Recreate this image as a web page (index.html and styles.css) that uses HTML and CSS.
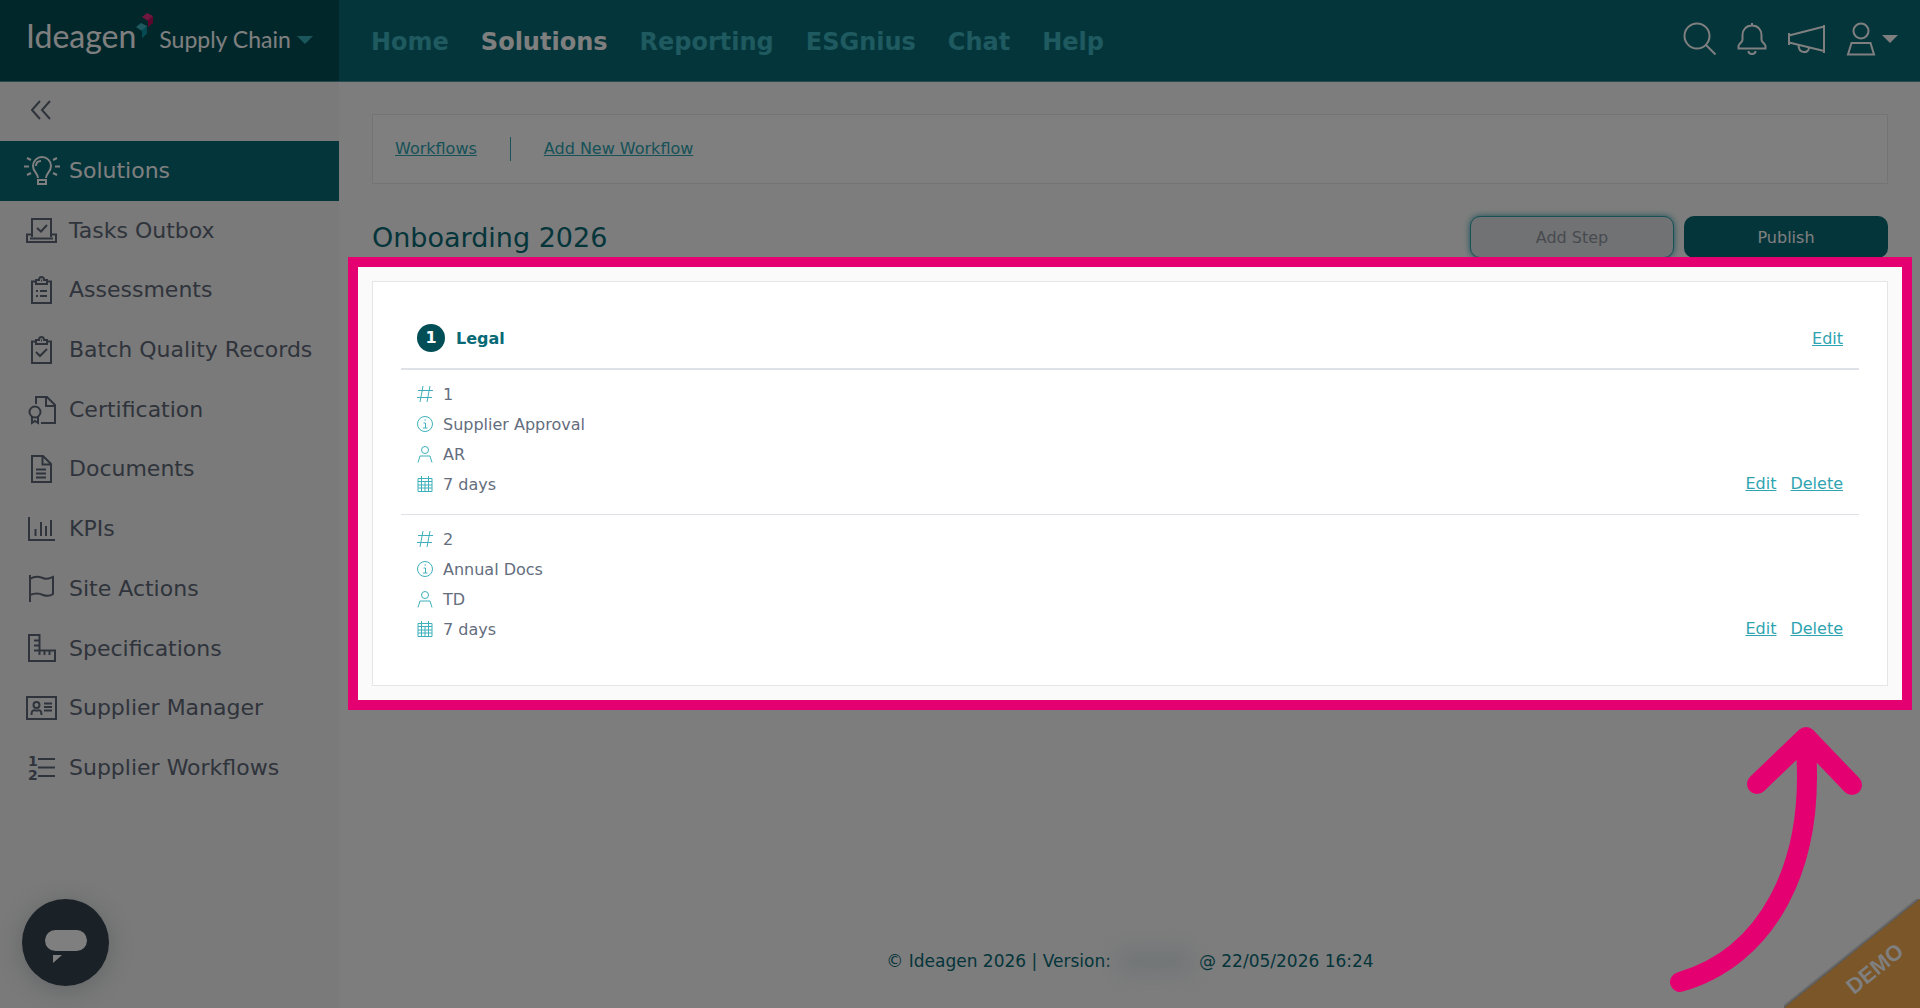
FILE: index.html
```html
<!DOCTYPE html>
<html lang="en">
<head>
  <meta charset="UTF-8" />
  <meta name="viewport" content="width=device-width, initial-scale=1.0"/>
  <title>Onboarding 2026 - Ideagen Supply Chain</title>
  <link rel="stylesheet" href="styles.css">
</head>
<body>
  <header class="topbar">
    <button class="brand" type="button">
      <span class="brand-name">Ideagen</span>
      <svg class="brand-mark" width="18" height="26" viewBox="0 0 18 26">
        <path d="M6 4 L11 0 L17 3 L17 9 L12 14 L12 8 Z" fill="#e0307e"/>
        <path d="M12 7 L17 3 L17 10 L12 14 Z" fill="#b8105c"/>
        <path d="M0 14 L5 10 L11 13 L11 20 L6 25 L6 18 Z" fill="#3fb4c0"/>
        <path d="M6 17 L11 13 L11 20 L6 25 Z" fill="#0a92a6"/>
      </svg>
      <span class="brand-product">Supply Chain</span>
      <span class="caret caret-teal"></span>
    </button>
    <nav class="main-nav">
      <a href="#">Home</a>
      <a href="#" class="active">Solutions</a>
      <a href="#">Reporting</a>
      <a href="#">ESGnius</a>
      <a href="#">Chat</a>
      <a href="#">Help</a>
    </nav>
    <div class="tools">
      <button type="button" aria-label="Search">
        <svg width="34" height="34" viewBox="0 0 34 34"><circle cx="14" cy="14" r="12.500"/><path d="M23 23 L32.500 32.500"/></svg>
      </button>
      <button type="button" aria-label="Notifications">
        <svg width="30" height="34" viewBox="0 0 30 34"><path d="M15 1 V4 M15 3.500 C9 3.500 5.500 8 5.500 13 V18 C5.500 20 1.500 22 1.500 24 V26.500 H28.500 V24 C28.500 22 24.500 20 24.500 18 V13 C24.500 8 21 3.500 15 3.500 Z M11.500 29 C11.500 33 18.500 33 18.500 29"/></svg>
      </button>
      <button type="button" aria-label="Announcements">
        <svg width="39" height="34" viewBox="0 0 39 34"><path d="M2 11 V23 M2 13.500 L37 4.500 V29 L2 20.500 M37 3 V31 M11.500 23 C11.500 32 22 32 22 25.500"/></svg>
      </button>
      <button type="button" aria-label="Account" class="account">
        <svg width="30" height="34" viewBox="0 0 30 34"><circle cx="15" cy="9" r="7.500"/><path d="M5.500 21 H24.500 L28 32.500 H2 Z"/></svg>
        <span class="caret caret-white"></span>
      </button>
    </div>
  </header>

  <div class="layout">
    <aside class="sidebar">
      <button class="collapse" type="button" aria-label="Collapse menu">
        <svg width="20" height="20" viewBox="0 0 20 20"><path d="M9 1 L1 10 L9 19 M19 1 L11 10 L19 19"/></svg>
      </button>
      <ul class="menu">
        <li><a href="#" class="active">
          <svg width="36" height="30" viewBox="0 0 36 30"><path d="M14 22 C14 17 9 16 9 10 A9 9 0 0 1 27 10 C27 16 22 17 22 22 M14 24 H22 V28 H14 Z M12 10 C12 7 14 5 17 5 M0 10.500 H5 M31 10.500 H36 M3 2 L7 4 M33 2 L29 4 M3 19 L7 17 M33 19 L29 17"/></svg>
          Solutions</a></li>
        <li><a href="#">
          <svg width="36" height="30" viewBox="0 0 36 30"><path d="M8 21 V3 H27 V21 M7 18.500 H3 V26 H32 V18.500 H28 M6 22.500 H29 M13 12 L17 15.500 L23 9"/></svg>
          Tasks Outbox</a></li>
        <li><a href="#">
          <svg width="36" height="30" viewBox="0 0 36 30"><path d="M12 6.500 H8 V28 H27 V6.500 H23 M12 9 V5 H15 C15 1 20 1 20 5 H23 V9 Z M17 5.500 H18 M12 16 H14 M16 16 H23 M12 21 H14 M16 21 H23"/></svg>
          Assessments</a></li>
        <li><a href="#">
          <svg width="36" height="30" viewBox="0 0 36 30"><path d="M12 6.500 H8 V28 H27 V6.500 H23 M12 9 V5 H15 C15 1 20 1 20 5 H23 V9 Z M17 5.500 H18 M12 17 L16 21 L23 14"/></svg>
          Batch Quality Records</a></li>
        <li><a href="#">
          <svg width="36" height="30" viewBox="0 0 36 30"><circle cx="11" cy="17" r="5.500"/><path d="M8 21.500 V28 L11 26 L14 28 V21.500 M12 9 V2 H23 L31 10 V28 H17 M22 2 V11 H31"/></svg>
          Certification</a></li>
        <li><a href="#">
          <svg width="36" height="30" viewBox="0 0 36 30"><path d="M8 2 H19 L27 10 V28 H8 Z M18.500 2 V10.500 H27 M12 15.500 H22 M12 19.500 H22 M12 23.500 H22"/></svg>
          Documents</a></li>
        <li><a href="#">
          <svg width="36" height="30" viewBox="0 0 36 30"><path d="M5 3 V26 H31 M11.500 15 V22 M17 8 V22 M22 12 V22 M27 6 V22"/></svg>
          KPIs</a></li>
        <li><a href="#">
          <svg width="36" height="30" viewBox="0 0 36 30"><path d="M6 1 V28 M6 5 C12 1 16 3 19 4 C23 6 26 4 29 3 V20 C25 23 22 22 19 21 C15 19 11 19 6 21"/></svg>
          Site Actions</a></li>
        <li><a href="#">
          <svg width="36" height="30" viewBox="0 0 36 30"><path d="M5 2 H15.500 V17.500 H31 V28 H5 Z M10 7.500 H15 M10 12.500 H15 M10 17.500 H15 M15.500 17.500 V22 M20.500 18 V22 M25.500 18 V22"/></svg>
          Specifications</a></li>
        <li><a href="#">
          <svg width="36" height="30" viewBox="0 0 36 30"><circle cx="12.500" cy="12" r="3"/><path d="M3 4 H32 V26 H3 Z M7.500 22 C7.500 16 10 17.500 12.500 17.500 C15 17.500 17.500 16 17.500 22 M20 10.500 H28 M20 14 H28 M20 17.500 H28"/></svg>
          Supplier Manager</a></li>
        <li><a href="#">
          <svg width="36" height="30" viewBox="0 0 36 30"><text x="4" y="13">1</text><text x="4" y="27">2</text><path d="M14 6 H31 M14 14.500 H31 M14 23 H31"/></svg>
          Supplier Workflows</a></li>
      </ul>
    </aside>

    <main class="content">
      <nav class="subnav">
        <a href="#">Workflows</a>
        <a href="#">Add New Workflow</a>
      </nav>

      <div class="title-row">
        <h1>Onboarding 2026</h1>
        <div class="actions">
          <button class="btn btn-light" type="button">Add Step</button>
          <button class="btn btn-dark" type="button">Publish</button>
        </div>
      </div>

      <section class="steps">
        <div class="card">
          <div class="card-head">
            <span class="badge">1</span>
            <h2>Legal</h2>
            <a href="#">Edit</a>
          </div>
          <div class="task">
            <ul>
              <li><svg width="16" height="18" viewBox="0 0 16 18"><path d="M6 1 L3 17 M13 1 L10 17 M1 5.500 H16 M0 12.500 H15"/></svg>1</li>
              <li><svg width="16" height="18" viewBox="0 0 16 18"><circle cx="8" cy="9" r="7.500"/><path d="M6.500 8 H8.500 V13 M6 13 H10.500 M7.500 5 H9"/></svg>Supplier Approval</li>
              <li><svg width="16" height="18" viewBox="0 0 16 18"><circle cx="8" cy="5" r="3.500"/><path d="M1 17.500 L3 11 H13 L15 17.500"/></svg>AR</li>
              <li><svg width="16" height="18" viewBox="0 0 16 18"><path d="M1 3.500 H15 V16.500 H1 Z M1 6.500 H15 M1 10 H15 M1 13 H15 M4.500 1 V16 M8 6 V16 M11.500 1 V16"/></svg>7 days</li>
            </ul>
            <div class="task-links"><a href="#">Edit</a><a href="#">Delete</a></div>
          </div>
          <div class="task">
            <ul>
              <li><svg width="16" height="18" viewBox="0 0 16 18"><path d="M6 1 L3 17 M13 1 L10 17 M1 5.500 H16 M0 12.500 H15"/></svg>2</li>
              <li><svg width="16" height="18" viewBox="0 0 16 18"><circle cx="8" cy="9" r="7.500"/><path d="M6.500 8 H8.500 V13 M6 13 H10.500 M7.500 5 H9"/></svg>Annual Docs</li>
              <li><svg width="16" height="18" viewBox="0 0 16 18"><circle cx="8" cy="5" r="3.500"/><path d="M1 17.500 L3 11 H13 L15 17.500"/></svg>TD</li>
              <li><svg width="16" height="18" viewBox="0 0 16 18"><path d="M1 3.500 H15 V16.500 H1 Z M1 6.500 H15 M1 10 H15 M1 13 H15 M4.500 1 V16 M8 6 V16 M11.500 1 V16"/></svg>7 days</li>
            </ul>
            <div class="task-links"><a href="#">Edit</a><a href="#">Delete</a></div>
          </div>
        </div>
        <!-- guide overlay: frame, dimmed page, arrow -->
        <div class="spotlight"></div>
        <svg class="arrow" width="210" height="280" viewBox="0 0 210 280"><path d="M20 262 C104 238 158 150 145 18 M97 64 L146 17 L192 65"/></svg>
      </section>

      <footer class="footer">
        <span>© Ideagen 2026 | Version:</span>
        <span class="version"></span>
        <span>@ 22/05/2026 16:24</span>
      </footer>
    </main>
  </div>

  <button class="chat" type="button" aria-label="Open chat">
    <svg width="42" height="26" viewBox="0 0 42 26"><rect width="42" height="21" rx="10.500"/><path d="M8 25 H17 L8 33 Z"/></svg>
  </button>
  <div class="ribbon"><span>DEMO</span></div>
</body>
</html>
```
FILE: styles.css
```css
* {
  box-sizing: border-box;
}
body {
  margin: 0;
  min-height: 100vh;
  display: flex;
  flex-direction: column;
  font-family: Verdana, 'DejaVu Sans', sans-serif;
  font-size: 16px;
  color: #646d7d;
  background-color: #fafafa;
}
button {
  font-family: inherit;
  font-size: inherit;
  border: none;
  background: none;
  padding: 0;
  cursor: pointer;
}
ul {
  list-style: none;
  margin: 0;
  padding: 0;
}
svg {
  display: block;
  flex: none;
  fill: none;
  stroke: currentColor;
}

/* top bar */
.topbar {
  display: flex;
  height: 82px;
  background-color: #086a76;
  border-bottom: 1px solid #4c959d;
}
.brand {
  width: 339px;
  flex: none;
  display: flex;
  align-items: baseline;
  padding: 16px 0 0 26px;
  background-color: #024e57;
  color: #fff;
  font-family: Lato, sans-serif;
}
.brand-name {
  font-size: 32px;
  line-height: 40px;
}
.brand-mark {
  align-self: flex-start;
  margin-top: -3px;
  stroke: none;
}
.brand-product {
  margin-left: 5px;
  font-size: 23px;
}
.caret {
  border: 8px solid transparent;
  border-bottom: none;
}
.caret-teal {
  align-self: flex-start;
  margin: 20px 0 0 6px;
  border-top-color: #36adb8;
}
.caret-white {
  border-top-color: #fff;
}
.main-nav {
  display: flex;
  align-items: center;
  gap: 32px;
  padding: 2px 0 0 32px;
}
.main-nav a {
  color: #3cb4be;
  font-size: 24px;
  font-weight: bold;
  text-decoration: none;
}
.main-nav a.active {
  color: #fff;
}
.tools {
  display: flex;
  align-items: center;
  gap: 20px;
  margin-left: auto;
  padding: 0 22px 3px 0;
}
.tools button {
  color: #fff;
}
.tools svg {
  stroke-width: 2;
}
.tools .account {
  display: flex;
  align-items: center;
  gap: 6px;
}

/* side menu */
.layout {
  flex: 1;
  display: flex;
}
.sidebar {
  width: 339px;
  flex: none;
  background-color: #f4f4f4;
}
.collapse {
  display: block;
  padding: 18px 31px 21px;
  color: #5f6978;
}
.collapse svg {
  stroke-width: 2;
}
.menu a {
  display: flex;
  align-items: center;
  gap: 9px;
  padding: 15px 24px;
  color: #5f6978;
  font-size: 22px;
  line-height: 1.35;
  text-decoration: none;
  white-space: nowrap;
}
.menu a.active {
  background-color: #086a76;
  color: #fff;
}
.menu svg {
  margin: -2px 0;
  stroke-width: 2;
}
.menu text {
  fill: currentColor;
  stroke: none;
  font-size: 14px;
  font-weight: bold;
}

/* content */
.content {
  flex: 1;
  display: flex;
  flex-direction: column;
  padding: 32px 32px 0 33px;
}
.subnav {
  display: flex;
  align-items: center;
  height: 70px;
  padding: 0 22px;
  border: 1px solid #e6e8ea;
  background-color: #fefefe;
}
.subnav a {
  color: #2fa4b0;
  line-height: 24px;
}
.subnav a + a {
  margin-left: 33px;
  padding-left: 33px;
  border-left: 1px solid #2fa4b0;
}
.title-row {
  display: flex;
  justify-content: space-between;
  align-items: center;
  margin-top: 32px;
}
h1 {
  margin: 0;
  color: #086a76;
  font-size: 27px;
  font-weight: normal;
}
.actions {
  display: flex;
  gap: 10px;
}
.btn {
  width: 204px;
  height: 42px;
  border-radius: 10px;
}
.btn-light {
  border: 1px solid #2fa4b0;
  background-color: #e2e4e7;
  color: #8f959f;
  box-shadow: 0 0 6px #2fa4b0;
}
.btn-dark {
  background-color: #086a76;
  color: #fff;
}

.steps {
  position: relative;
  margin-top: 23px;
}
.card {
  padding: 26px 28px;
  border: 1px solid #e4e6e8;
  background-color: #fff;
}
.card a {
  color: #2fa4b0;
}
.card-head {
  display: flex;
  align-items: center;
  height: 62px;
  padding: 0 16px;
  border-bottom: 2px solid #dee2e7;
}
.card-head a {
  margin-left: auto;
}
.badge {
  width: 28px;
  height: 28px;
  border-radius: 50%;
  background-color: #024e57;
  color: #fff;
  font-weight: bold;
  line-height: 28px;
  text-align: center;
}
h2 {
  margin: 0 0 0 11px;
  color: #086a76;
  font-size: 16px;
}
.task {
  display: flex;
  justify-content: space-between;
  align-items: flex-end;
  padding: 9px 16px 15px;
  border-bottom: 1px solid #dee2e7;
}
.task:last-child {
  border-bottom: none;
}
.task li {
  display: flex;
  align-items: center;
  gap: 10px;
  height: 30px;
}
.task svg {
  color: #3fb0bb;
}
.task-links {
  display: flex;
  gap: 14px;
  line-height: 30px;
}

.spotlight {
  position: absolute;
  inset: -24px;
  z-index: 10;
  border: 10px solid #e50071;
  box-shadow: 0 0 0 4000px rgba(0, 0, 0, 0.5);
  pointer-events: none;
}
.arrow {
  position: absolute;
  top: calc(100% + 34px);
  right: 18px;
  z-index: 11;
  color: #e50071;
  stroke-width: 20;
  stroke-linecap: round;
  stroke-linejoin: round;
  pointer-events: none;
}

.footer {
  display: flex;
  justify-content: center;
  align-items: center;
  margin-top: auto;
  padding-bottom: 34px;
  color: #086a76;
  font-size: 17px;
}
.version {
  width: 76px;
  height: 26px;
  margin: 0 6px;
  border-radius: 10px;
  background-color: #e4ebef;
  filter: blur(10px);
}

.chat {
  position: fixed;
  left: 22px;
  bottom: 22px;
  width: 87px;
  height: 87px;
  border-radius: 50%;
  background-color: #34444f;
  box-shadow: 0 4px 24px rgba(50, 70, 80, 0.25);
}
.chat svg {
  margin: 0 auto;
  overflow: visible;
  fill: #fff;
  stroke: none;
}
.ribbon {
  position: fixed;
  right: 0;
  bottom: 0;
  width: 136px;
  height: 109px;
  background: linear-gradient(to bottom right, transparent 48%, rgba(0, 0, 0, 0.3) 50%, #f4ac50 50%);
}
.ribbon span {
  position: absolute;
  right: 12px;
  bottom: 26px;
  color: #fff;
  font-family: 'Liberation Sans', Arial, sans-serif;
  font-size: 22px;
  font-weight: bold;
  transform: rotate(-39deg);
}
```
